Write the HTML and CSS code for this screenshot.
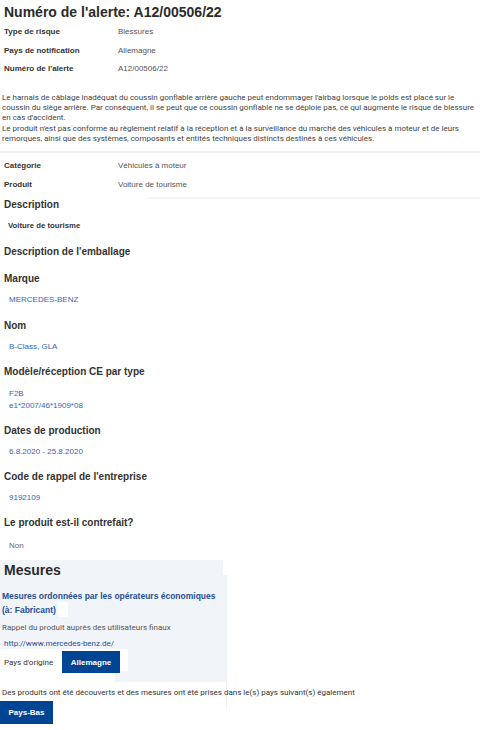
FILE: index.html
```html
<!DOCTYPE html>
<html lang="fr">
<head>
<meta charset="utf-8">
<title>Numéro de l'alerte: A12/00506/22</title>
<link rel="stylesheet" href="styles.css">
</head>
<body>
<div class="page">
  <h1 class="title">Numéro de l'alerte: A12/00506/22</h1>
  <div class="kv kv-top">
    <div class="k">Type de risque</div><div class="val">Blessures</div>
    <div class="k">Pays de notification</div><div class="val">Allemagne</div>
    <div class="k">Numéro de l'alerte</div><div class="val">A12/00506/22</div>
  </div>
  <p class="desc">Le harnais de câblage inadéquat du coussin gonflable arrière gauche peut endommager l'airbag lorsque le poids est placé sur le coussin du siège arrière. Par conséquent, il se peut que ce coussin gonflable ne se déploie pas, ce qui augmente le risque de blessure en cas d'accident.<br>Le produit n'est pas conforme au règlement relatif à la réception et à la surveillance du marché des véhicules à moteur et de leurs remorques, ainsi que des systèmes, composants et entités techniques distincts destinés à ces véhicules.</p>
  <div class="rule"></div>
  <div class="kv kv-cat">
    <div class="k">Catégorie</div><div class="val">Véhicules à moteur</div>
    <div class="k">Produit</div><div class="val">Voiture de tourisme</div>
  </div>
  <div class="rule rule-part"></div>
  <h3 class="h h-first">Description</h3>
  <div class="v v-strong">Voiture de tourisme</div>
  <h3 class="h h-14">Description de l'emballage</h3>
  <h3 class="h h-15">Marque</h3>
  <div class="v v-blue">MERCEDES-BENZ</div>
  <h3 class="h h-14">Nom</h3>
  <div class="v v-blue">B-Class, GLA</div>
  <h3 class="h">Modèle/réception CE par type</h3>
  <div class="v v-blue v-10">F2B<br>e1*2007/46*1909*08</div>
  <h3 class="h">Dates de production</h3>
  <div class="v v-blue">6.8.2020 - 25.8.2020</div>
  <h3 class="h">Code de rappel de l'entreprise</h3>
  <div class="v v-blue">9192109</div>
  <h3 class="h">Le produit est-il contrefait?</h3>
  <div class="v v-gray v-11">Non</div>

  <div class="mesures-head"><h2>Mesures</h2></div>
  <div class="mesures-body">
    <div class="card">
      <div class="card-title">Mesures ordonnées par les opérateurs économiques (à: Fabricant)<span class="gap"></span></div>
      <div class="card-text">Rappel du produit auprès des utilisateurs finaux</div>
      <div class="card-link">http://www.mercedes-benz.de/</div>
      <div class="origin">
        <span class="origin-label">Pays d'origine</span>
        <span class="btn btn-origin">Allemagne</span>
      </div>
      <div class="card-foot"><span></span></div>
    </div>
    <div class="also">Des produits ont été découverts et des mesures ont été prises dans le(s) pays suivant(s) également</div>
  </div>
  <span class="btn btn-country">Pays-Bas</span>
</div>
</body>
</html>
```

FILE: styles.css
```css
* { box-sizing: border-box; }
html, body { margin: 0; padding: 0; background: #fff; }
body {
  font-family: "Liberation Sans", Arial, sans-serif;
  color: #333;
  width: 480px;
  height: 730px;
  overflow: hidden;
}
.page { padding: 0; }

.title {
  margin: 0;
  padding: 1px 4px 0;
  font-size: 14px;
  line-height: 22px;
  font-weight: bold;
  color: #2b2b2b;
}

.kv {
  display: grid;
  grid-template-columns: 114px 1fr;
  padding-left: 4px;
  font-size: 8px;
  line-height: 18.5px;
}
.kv .k { font-weight: bold; color: #333; }
.kv .val { color: #555; }
.kv-cat { margin-top: 2.5px; line-height: 19px; }

.desc {
  margin: 14px 0 0;
  padding: 0 2px;
  font-family: Roboto, "Liberation Sans", sans-serif;
  font-size: 8px;
  line-height: 10.4px;
  color: #444;
}

.rule {
  height: 0;
  margin-top: 6.5px;
  border-top: 2px solid #f1f1f1;
}
.rule-part {
  margin: 3.5px 0 0 148px;
  border-top-color: #f4f4f4;
}

.h {
  margin: 13px 0 0;
  padding-left: 4px;
  font-size: 10px;
  line-height: 12px;
  font-weight: bold;
  color: #333;
}
.h-first { margin-top: 0; }
.h-14 { margin-top: 14px; }
.h-15 { margin-top: 15px; }

.v {
  margin-top: 9px;
  padding-left: 9px;
  font-size: 8px;
  line-height: 12px;
}
.v-10 { margin-top: 10px; }
.v-11 { margin-top: 11px; }
.v-strong { padding-left: 8px; font-size: 7.75px; font-weight: bold; color: #333; }
.v-blue { color: #3366b8; }
.v-gray { color: #666; }

.mesures-head {
  margin-top: 8px;
  width: 223px;
  height: 15px;
  background: #f1f4f9;
}
.mesures-head h2 {
  margin: 0;
  padding-left: 4px;
  font-size: 14px;
  line-height: 20px;
  font-weight: bold;
  color: #2b2b2b;
}

.mesures-body {
  width: 227px;
  height: 135px;
  border-right: 1px solid #eef2f7;
}
.card {
  width: 226px;
  padding-top: 16px;
  background: #f1f4f9;
}
.card-title {
  padding-left: 2px;
  font-size: 8.5px;
  line-height: 11px;
  font-weight: bold;
  color: #1f4f95;
}
.gap {
  display: inline-block;
  width: 10px;
  height: 15px;
  margin-left: 2px;
  vertical-align: -4px;
  background: #fff;
}
.card-text {
  margin-top: 5px;
  padding-left: 2px;
  font-family: Roboto, "Liberation Sans", sans-serif;
  font-size: 8px;
  line-height: 11px;
  color: #555;
}
.card-link {
  margin-top: 5px;
  padding-left: 4px;
  font-family: Roboto, "Liberation Sans", sans-serif;
  font-size: 8px;
  line-height: 11px;
  color: #1f4f95;
}
.origin {
  display: flex;
  align-items: flex-start;
  width: 128px;
  height: 22px;
  background: #fff;
}
.origin-label {
  width: 62px;
  padding-left: 4px;
  font-family: Roboto, "Liberation Sans", sans-serif;
  font-size: 8px;
  line-height: 28px;
  color: #333;
}
.btn {
  display: flex;
  align-items: center;
  justify-content: center;
  background: #004494;
  color: #fff;
  font-size: 8px;
  font-weight: bold;
}
.btn-origin {
  width: 58px;
  height: 22px;
  margin-top: 2px;
}
.card-foot { height: 11px; }
.card-foot span {
  display: block;
  width: 115px;
  height: 11px;
  background: #fff;
}
.also {
  margin-top: 4.5px;
  padding-left: 2px;
  font-family: Roboto, "Liberation Sans", sans-serif;
  font-size: 8px;
  line-height: 11px;
  color: #333;
  white-space: nowrap;
}
.btn-country {
  width: 53px;
  height: 23px;
  margin-top: -9px;
}
```
